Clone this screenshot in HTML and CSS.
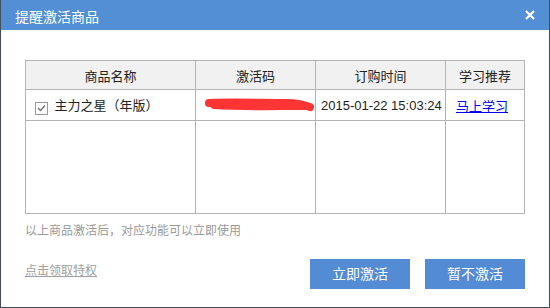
FILE: index.html
```html
<!DOCTYPE html>
<html lang="zh-CN">
<head>
    <meta charset="UTF-8">
    <title>提醒激活商品</title>
    <link rel="stylesheet" href="styles.css">
</head>
<body>
    <div class="dialog">
        <div class="titlebar">
            <span class="title">提醒激活商品</span>
            <svg class="close" width="10" height="10" viewBox="0 0 10 10">
                <path d="M1 1 L9 9 M9 1 L1 9" stroke="#fff" stroke-width="2.2"/>
            </svg>
        </div>

        <div class="content">
            <table class="goods">
                <thead>
                    <tr>
                        <th class="col-name">商品名称</th>
                        <th class="col-code">激活码</th>
                        <th class="col-time">订购时间</th>
                        <th class="col-study">学习推荐</th>
                    </tr>
                </thead>
                <tbody>
                    <tr class="item">
                        <td class="name-cell">
                            <span class="checkbox">
                                <svg width="9" height="8" viewBox="0 0 9 8"><path d="M1 4 L3.5 6.5 L8 1.5" fill="none" stroke="#777" stroke-width="1.5"/></svg>
                            </span>
                            主力之星（年版）
                        </td>
                        <td class="code-cell">
                            <svg class="scribble" width="112" height="14" viewBox="0 0 112 14">
                                <path d="M5 5 C30 4 60 5 82 5 C92 5 98 6 106 9" fill="none" stroke="#ff3434" stroke-width="8" stroke-linecap="round"/>
                                <path d="M10 8 C40 10 70 9 100 9" fill="none" stroke="#ff3434" stroke-width="6" stroke-linecap="round"/>
                            </svg>
                        </td>
                        <td class="time-cell">2015-01-22 15:03:24</td>
                        <td class="study-cell"><a href="#" class="study-link">马上学习</a></td>
                    </tr>
                    <tr class="blank">
                        <td></td>
                        <td></td>
                        <td></td>
                        <td></td>
                    </tr>
                </tbody>
            </table>

            <p class="note">以上商品激活后，对应功能可以立即使用</p>

            <div class="footer">
                <a href="#" class="privilege">点击领取特权</a>
                <div class="buttons">
                    <a href="#" class="button">立即激活</a>
                    <a href="#" class="button">暂不激活</a>
                </div>
            </div>
        </div>
    </div>
</body>
</html>
```

FILE: styles.css
```css
body {
    margin: 0;
    padding: 0;
    font-family: "Liberation Sans", "Noto Sans CJK SC", sans-serif;
    font-size: 12px;
    color: #222;
    background-color: #fff;
}
.dialog {
    width: 550px;
    height: 308px;
    box-sizing: border-box;
    border: 1px solid #434d5a;
    border-top: none;
    background-color: #fff;
}
.titlebar {
    height: 30px;
    background-color: #538fd5;
    color: #fff;
    display: flex;
    align-items: center;
    justify-content: space-between;
    padding: 0 14px 0 14px;
}
.title {
    font-size: 14px;
    padding-top: 1px;
}
.close {
    display: block;
    margin-top: -1px;
}
.content {
    padding: 30px 24px 0 24px;
}
.goods {
    width: 500px;
    border-collapse: collapse;
    table-layout: fixed;
}
.goods th,
.goods td {
    border: 1px solid #b3b3b3;
    padding: 0;
}
.goods th {
    height: 28px;
    background-color: #f1f1f1;
    font-weight: normal;
    font-size: 13px;
    color: #222;
}
.col-name { width: 169px; }
.col-code { width: 119px; }
.col-time { width: 129px; }
.item td {
    height: 30px;
    font-size: 13px;
}
.name-cell {
    padding-left: 9px !important;
}
.checkbox {
    display: inline-flex;
    align-items: center;
    justify-content: center;
    width: 11px;
    height: 11px;
    border: 1px solid #9a9a9a;
    vertical-align: -2px;
    margin-right: 3px;
}
.code-cell {
    padding-left: 8px !important;
}
.scribble {
    display: block;
}
.time-cell {
    padding-left: 5px !important;
}
.study-cell {
    padding-left: 10px !important;
}
.study-link {
    color: #0000ee;
}
.blank td {
    height: 92px;
}
.note {
    margin: 7px 0 0 0;
    color: #9a9a9a;
    font-size: 12px;
}
.footer {
    display: flex;
    justify-content: space-between;
    margin-top: 21px;
}
.privilege {
    color: #a0a0a0;
    font-size: 12px;
    margin-top: 2px;
}
.buttons {
    display: flex;
    gap: 15px;
    margin-top: 0;
}
.button {
    display: inline-block;
    width: 100px;
    height: 30px;
    line-height: 30px;
    text-align: center;
    background-color: #538bd4;
    color: #fff;
    font-size: 14px;
    text-decoration: none;
}
```
